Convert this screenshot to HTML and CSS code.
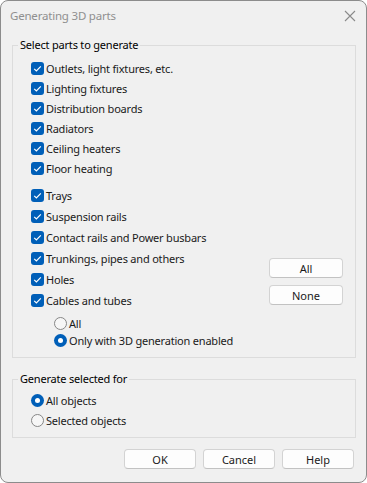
FILE: index.html
```html
<!DOCTYPE html>
<html lang="en">
<head>
    <meta charset="UTF-8">
    <title>Generating 3D parts</title>
    <link rel="stylesheet" href="styles.css">
</head>
<body>
    <div class="dialog">
        <div class="titlebar">
            <span class="title">Generating 3D parts</span>
            <svg class="close" width="12" height="12" viewBox="0 0 12 12">
                <path d="M1 1 L11 11 M11 1 L1 11" stroke="#8a8a8a" stroke-width="1.1" fill="none"/>
            </svg>
        </div>

        <fieldset class="group parts">
            <legend>Select parts to generate</legend>
            <div class="parts-body">
                <div class="parts-list">
                    <div class="block">
                        <label class="row"><span class="check"></span>Outlets, light fixtures, etc.</label>
                        <label class="row"><span class="check"></span>Lighting fixtures</label>
                        <label class="row"><span class="check"></span>Distribution boards</label>
                        <label class="row"><span class="check"></span>Radiators</label>
                        <label class="row"><span class="check"></span>Ceiling heaters</label>
                        <label class="row"><span class="check"></span>Floor heating</label>
                    </div>
                    <div class="block second">
                        <label class="row tall"><span class="check"></span>Trays</label>
                        <label class="row tall"><span class="check"></span>Suspension rails</label>
                        <label class="row tall"><span class="check"></span>Contact rails and Power busbars</label>
                        <label class="row tall"><span class="check"></span>Trunkings, pipes and others</label>
                        <label class="row tall"><span class="check"></span>Holes</label>
                        <label class="row tall"><span class="check"></span>Cables and tubes</label>
                    </div>
                    <div class="sub">
                        <label class="row short"><span class="radio"></span>All</label>
                        <label class="row short"><span class="radio on"></span>Only with 3D generation enabled</label>
                    </div>
                </div>
                <div class="side-buttons">
                    <button class="btn side">All</button>
                    <button class="btn side">None</button>
                </div>
            </div>
        </fieldset>

        <fieldset class="group target">
            <legend>Generate selected for</legend>
            <label class="row"><span class="radio on"></span>All objects</label>
            <label class="row"><span class="radio"></span>Selected objects</label>
        </fieldset>

        <div class="footer">
            <button class="btn">OK</button>
            <button class="btn">Cancel</button>
            <button class="btn">Help</button>
        </div>
    </div>
</body>
</html>
```

FILE: styles.css
```css
* {
    margin: 0;
    padding: 0;
    box-sizing: border-box;
}

body {
    background: #ffffff;
    font-family: 'Segoe UI', 'Noto Sans', sans-serif;
    font-size: 11px;
    letter-spacing: -0.2px;
    color: #1a1a1a;
}

.dialog {
    width: 367px;
    height: 483px;
    background: #f0f0f0;
    border: 1px solid #8c8c8c;
    border-radius: 8px;
    overflow: hidden;
}

.titlebar {
    height: 29px;
    display: flex;
    align-items: center;
    justify-content: space-between;
    padding: 0 10px 0 9px;
}

.title {
    color: #8f8f8f;
    font-size: 11.5px;
}

.group {
    margin: 7px 10px 0 11px;
    border: 1px solid #dcdcdc;
    padding: 0 12px 0 18px;
}

.group legend {
    margin-left: -13px;
    padding: 0 2px;
    line-height: 16px;
    color: #000;
}

.parts {
    padding-top: 5px;
    padding-bottom: 8px;
}

.parts-body {
    display: flex;
    justify-content: space-between;
}

.row {
    display: flex;
    align-items: center;
    height: 20px;
    white-space: nowrap;
}

.row.tall {
    height: 21px;
}

.row.short {
    height: 17px;
}

.second {
    margin-top: 7px;
}

.sub {
    margin-top: 4px;
    padding-left: 23px;
}

.check {
    width: 13px;
    height: 13px;
    margin-right: 2px;
    border-radius: 3px;
    background: #005fb8 url("data:image/svg+xml;utf8,<svg xmlns='http://www.w3.org/2000/svg' width='13' height='13'><path d='M3.2 6.8 L5.4 9 L9.8 4.4' stroke='white' stroke-width='1.2' fill='none'/></svg>") no-repeat center;
    flex-shrink: 0;
}

.radio {
    width: 13px;
    height: 13px;
    margin-right: 2px;
    border-radius: 50%;
    border: 1px solid #868686;
    background: #f6f6f6;
    flex-shrink: 0;
    position: relative;
}

.radio.on {
    border: none;
    background: #005fb8;
}

.radio.on::after {
    content: '';
    position: absolute;
    left: 4px;
    top: 4px;
    width: 5px;
    height: 5px;
    border-radius: 50%;
    background: #fff;
}

.side-buttons {
    display: flex;
    flex-direction: column;
    gap: 7px;
    padding-top: 200px;
}

.btn {
    font-family: inherit;
    font-size: 11px;
    color: #1a1a1a;
    background: #fdfdfd;
    border: 1px solid #d3d3d3;
    border-bottom-color: #c2c2c2;
    border-radius: 4px;
    height: 20px;
    width: 72px;
}

.btn.side {
    width: 74px;
}

.target {
    margin-top: 13px;
    padding-top: 3px;
    padding-bottom: 7px;
}

.footer {
    display: flex;
    justify-content: flex-end;
    gap: 7px;
    padding: 11px 12px 0 0;
}
```
